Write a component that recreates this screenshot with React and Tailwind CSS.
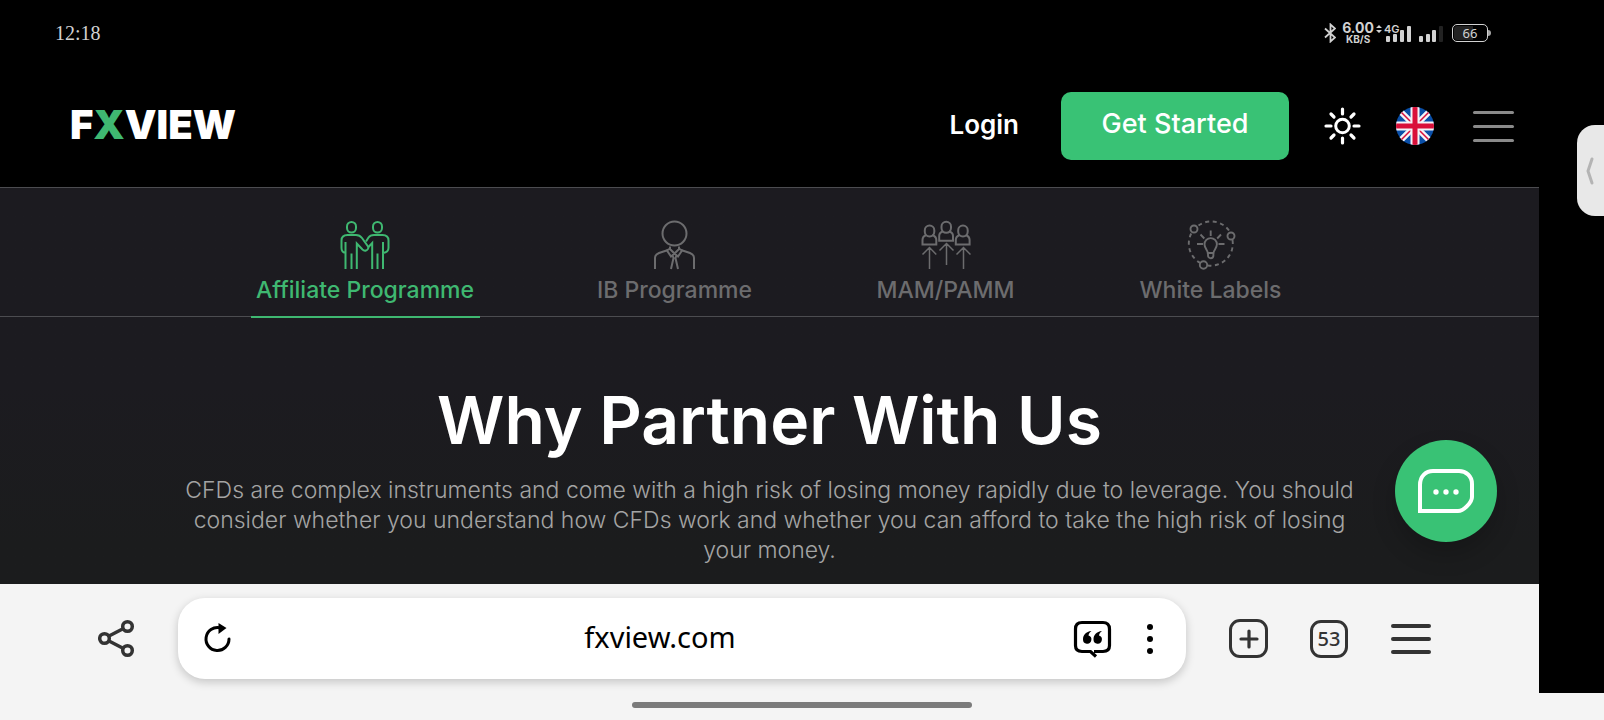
import { useState } from 'react';

const TABS = [
  { label: 'Affiliate Programme', icon: HandshakeIcon, width: 'w-[229px]' },
  { label: 'IB Programme', icon: BrokerIcon, width: 'w-[168px]' },
  { label: 'MAM/PAMM', icon: TeamIcon, width: 'w-[152px]' },
  { label: 'White Labels', icon: IdeaIcon, width: 'w-[156px]' },
];

function HandshakeIcon() {
  return (
    <svg className="w-[50px] h-[50px]" viewBox="0 0 50 50" fill="none" stroke="currentColor" strokeWidth="2">
      <rect x="7" y="2" width="9" height="10.5" rx="4.5" />
      <rect x="33" y="2" width="9" height="10.5" rx="4.5" />
      <path d="M5.5 49V22M5.500 33C3 32.500 1.500 31 1.500 28V20.500C1.500 17 4 15 7.500 15H16C19 15 20.500 16 22 18L28 26.500C28.800 28 27.800 30 26 30.500C24.500 31 23.500 30.500 22.500 29.500L16.800 23.500V49M11.500 33.500V49" />
      <path d="M43 49V22M43 33C46.500 32.500 48.500 31 48.500 28V20.500C48.500 17 46 15 42.500 15H34C31 15 29.500 16 28.500 17.500L26 21.500M28 27.500L32.200 23V49M37.500 33.500V49" />
    </svg>
  );
}

function BrokerIcon() {
  return (
    <svg className="w-[50px] h-[50px]" viewBox="0 0 50 50" fill="none" stroke="currentColor" strokeWidth="2">
      <circle cx="24.500" cy="13.500" r="12" />
      <path d="M5 49V38C5 35.500 6.500 34 9 33L18 30M44 49V38C44 35.500 42.500 34 40 33L31 30" />
      <path d="M20 26.500V29L24.500 33.500L29 29V26.500M20 28.500L17 30.500L21 36.500L24.500 33.500L28 36.500L32 30.500L29 28.500M22.500 35.500L23.500 38L21 49M26.500 35.500L25.500 38L28 49" />
    </svg>
  );
}

function TeamIcon() {
  return (
    <svg className="w-[50px] h-[50px]" viewBox="0 0 50 50" fill="none" stroke="currentColor" strokeWidth="2">
      <rect x="3.800" y="5.500" width="9.500" height="11" rx="4.700" />
      <rect x="20.500" y="1.800" width="9.500" height="11" rx="4.700" />
      <rect x="37.200" y="5.500" width="9.500" height="11" rx="4.700" />
      <path d="M5.300 15C2.500 16 1.500 17.500 1.500 20V24.500H15.300V20C15.300 17.500 14 16 11.300 15" />
      <path d="M22 11.300C19.300 12.300 18.200 13.500 18.200 16V20.800H32V16C32 13.500 30.700 12.300 28 11.300" />
      <path d="M38.700 15C36 16 34.800 17.500 34.800 20V24.500H48.600V20C48.600 17.500 47.300 16 44.700 15" />
      <path d="M8.500 49V28M1.500 34.500L8.500 27.500L15.300 34.500M25.500 45V24M18.500 30.500L25.500 23.500L32.500 30.500M42.500 49V28M35.500 34.500L42.500 27.500L49.500 34.500" strokeWidth="1.500" />
    </svg>
  );
}

function IdeaIcon() {
  return (
    <svg className="w-[50px] h-[50px]" viewBox="0 0 50 50" fill="none" stroke="currentColor" strokeWidth="1.900">
      <path d="M12.500 5.500A22 22 0 0 1 44 12M46.500 20A22 22 0 0 1 22 45.500M14.500 43A22 22 0 0 1 5.500 13" strokeDasharray="4 3.500" />
      <circle cx="8" cy="9" r="3.500" />
      <circle cx="45" cy="16" r="3.500" />
      <circle cx="17.500" cy="45" r="3.700" />
      <path d="M21.800 33C21.800 30 18.500 28.500 18.500 24.300A6.200 6.200 0 0 1 30.900 24.300C30.900 28.500 27.500 30 27.500 33ZM22 33V35.500A2.700 2.700 0 0 0 27.400 35.500V33M24.700 10.500V16M14.500 14.500L18.300 18.500M35 14.500L31.200 18.500M11 24H17M32.500 24H38.500" />
    </svg>
  );
}

function StatusBar() {
  return (
    <div className="flex h-[66px] items-center justify-between pl-[55px] pr-[48px] text-[#d2d2d2]">
      <time className="font-['Liberation_Serif',serif] text-[20px] leading-5">12:18</time>
      <div className="flex items-center">
        <svg className="mr-1.5 h-[20px] w-[13px]" viewBox="0 0 13 20" fill="none" stroke="currentColor" strokeWidth="1.800">
          <path d="M2 5.500L12 14.500L7.500 18.500V1.500L12 5.500L2 14.500" />
        </svg>
        <div className="flex flex-col items-center font-['Inter',sans-serif] font-bold">
          <span className="text-[14px] leading-3">6.00</span>
          <span className="text-[10px] leading-[10px]">KB/S</span>
        </div>
        <div className="relative ml-0.5 h-[18px] w-[35px]">
          <svg className="h-[18px] w-[35px]" viewBox="0 0 35 18" fill="currentColor">
            <path d="M0 4L3 1L6 4ZM0 6L3 9L6 6Z" />
            <rect x="10" y="12" width="4" height="6" rx="1" />
            <rect x="17" y="10" width="4" height="8" rx="1" />
            <rect x="24" y="6" width="4" height="12" rx="1" />
            <rect x="31" y="2" width="4" height="16" rx="1" />
          </svg>
          <span className="absolute left-2 top-0 font-['Inter',sans-serif] text-[11px] font-semibold leading-[10px]">4G</span>
        </div>
        <svg className="ml-2 h-[18px] w-[24px]" viewBox="0 0 24 18" fill="currentColor">
          <rect x="0" y="12" width="4" height="6" rx="1" />
          <rect x="7" y="10" width="4" height="8" rx="1" />
          <rect x="13" y="6" width="4" height="12" rx="1" />
          <rect x="20" y="2" width="4" height="16" rx="1" fill="#222" />
        </svg>
        <div className="ml-[9px] flex h-[18px] w-[36px] items-center justify-center rounded-[5px] border border-[#d2d2d2] bg-linear-to-r from-[#222] from-60% to-black to-60% bg-clip-content p-px font-['Noto_Sans',sans-serif] text-[13px] leading-4">
          66
        </div>
        <div className="h-[6px] w-[3px] rounded-r-sm bg-[#a5a5a5]" />
      </div>
    </div>
  );
}

function Header() {
  return (
    <header className="flex h-[122px] items-center justify-between border-b border-[#4c4c50] pl-[70px] pr-[25px] pb-[1px]">
      <a href="#home" className="pb-0.5 font-['Inter',sans-serif] text-[40px] font-black leading-10">
        F<span className="text-[#3fb871]">X</span>VIEW
      </a>
      <div className="flex items-center">
        <a href="#login" className="pb-0.5 text-[26px] font-semibold leading-8">Login</a>
        <button type="button" className="ml-[42px] h-[68px] w-[228px] rounded-[10px] bg-[#39c275] pb-1 text-[27px] font-medium">
          Get Started
        </button>
        <button type="button" aria-label="Theme" className="ml-[35px]">
          <svg className="size-[38px]" viewBox="0 0 38 38" fill="none" stroke="currentColor" strokeWidth="3.200" strokeLinecap="round">
            <circle cx="18.500" cy="19" r="6.800" strokeWidth="3" />
            <path d="M18.500 2V7M18.500 31V36M2 19H7M30 19H35M7 7L10 10M30 7L27 10M7 31L10 28M30 31L27 28" />
          </svg>
        </button>
        <button type="button" aria-label="English" className="ml-[34px]">
          <svg className="size-[38px] rounded-full" viewBox="0 0 38 38">
            <rect width="38" height="38" fill="#0a4fa8" />
            <path d="M0 0L38 38M38 0L0 38" stroke="#f4f4f8" strokeWidth="6" />
            <path d="M0 0L38 38M38 0L0 38" stroke="#d9103a" strokeWidth="1.500" />
            <path d="M19 0V38M0 19H38" stroke="#f4f4f8" strokeWidth="9" />
            <path d="M19 0V38M0 19H38" stroke="#d9103a" strokeWidth="5" />
          </svg>
        </button>
        <button type="button" aria-label="Menu" className="ml-[39px] flex flex-col gap-[11px]">
          <span className="h-[3px] w-[41px] rounded-full bg-[#8a8a8a]" />
          <span className="h-[3px] w-[41px] rounded-full bg-[#8a8a8a]" />
          <span className="h-[3px] w-[41px] rounded-full bg-[#8a8a8a]" />
        </button>
      </div>
    </header>
  );
}

function BrowserBar() {
  return (
    <div className="flex h-[109px] items-center bg-[#f4f4f4] pl-[98px] pr-[108px] text-[#333]">
      <button type="button" aria-label="Share">
        <svg className="h-[40px] w-[38px]" viewBox="0 0 38 40" fill="none" stroke="currentColor" strokeWidth="3.500">
          <circle cx="6.500" cy="19.500" r="4.800" />
          <circle cx="29.500" cy="7.500" r="4.800" />
          <circle cx="29.500" cy="31.500" r="4.800" />
          <path d="M11 17L25 9.800M11 22L25 29.200" />
        </svg>
      </button>
      <div className="ml-[42px] flex h-[81px] flex-1 items-center rounded-[27px] bg-white pl-[25px] pr-[33px] text-black shadow-[0_3px_10px_rgba(0,0,0,0.2)]">
        <button type="button" aria-label="Reload">
          <svg className="h-[32px] w-[30px]" viewBox="0 0 30 32" fill="none" stroke="currentColor" strokeWidth="3" strokeLinecap="round">
            <path d="M17 4.800A11.500 11.500 0 1 0 26 16" />
            <path d="M15.500 0L23.500 5L15.500 11Z" fill="currentColor" stroke="none" />
          </svg>
        </button>
        <input
          type="text"
          aria-label="Address"
          defaultValue="fxview.com"
          className="min-w-0 flex-1 pb-1 pl-[14px] text-center font-['Noto_Sans',sans-serif] text-[29px] leading-9 outline-none"
        />
        <button type="button" aria-label="Reader">
          <svg className="h-[40px] w-[40px]" viewBox="0 0 40 40" fill="none" stroke="currentColor" strokeWidth="3.200">
            <path d="M21 32.500H30C34 32.500 36.500 30.500 36.500 26.500V10C36.500 5.500 34 3.500 30 3.500H9C4.500 3.500 2.500 5.500 2.500 10V26.500C2.500 30.500 4.500 32.500 9 32.500H17.500L23 37.500" />
            <path d="M18.500 12C13 12.500 10 16 10 20.500A4.200 4.200 0 1 0 15.500 16.500C15.700 14.500 16.800 13.300 18.500 12ZM29 12C23.500 12.500 20.500 16 20.500 20.500A4.200 4.200 0 1 0 26 16.500C26.200 14.500 27.300 13.300 29 12Z" fill="currentColor" stroke="none" />
          </svg>
        </button>
        <button type="button" aria-label="Page options" className="ml-[34px] flex flex-col gap-1.5">
          <span className="size-[6px] rounded-full bg-black" />
          <span className="size-[6px] rounded-full bg-black" />
          <span className="size-[6px] rounded-full bg-black" />
        </button>
      </div>
      <button type="button" aria-label="New tab" className="ml-[43px] flex size-[39px] items-center justify-center rounded-[11px] border-3 border-[#333]">
        <svg className="size-[20px]" viewBox="0 0 20 20" stroke="currentColor" strokeWidth="3.200" strokeLinecap="round">
          <path d="M10 2V18M2 10H18" />
        </svg>
      </button>
      <button type="button" className="ml-[42px] flex size-[38px] items-center justify-center rounded-[11px] border-3 border-[#333] font-['Noto_Sans',sans-serif] text-[20px] font-medium">
        53
      </button>
      <button type="button" aria-label="Browser menu" className="ml-[43px] flex flex-col gap-[9px]">
        <span className="h-[4px] w-[40px] rounded-full bg-[#333]" />
        <span className="h-[4px] w-[40px] rounded-full bg-[#333]" />
        <span className="h-[4px] w-[40px] rounded-full bg-[#333]" />
      </button>
    </div>
  );
}

export default function App() {
  const [active, setActive] = useState('Affiliate Programme');

  return (
    <div className="flex min-h-screen flex-col bg-[#f4f4f4] font-['Inter',sans-serif] text-white">
      <div className="flex flex-1 bg-black">
        <div className="flex min-w-0 flex-1 flex-col">
          <StatusBar />
          <Header />
          <main className="relative flex-1 bg-linear-to-b from-[#1c1b20] from-50% to-[#1b1c1d] to-90%">
            <nav className="flex h-[129px] justify-center gap-[111px] border-b border-[#4c4c50]">
              {TABS.map(({ label, icon: Icon, width }) => (
                <button
                  key={label}
                  type="button"
                  onClick={() => setActive(label)}
                  className={`${width} flex h-[130px] flex-col items-center border-b-2 pt-8 text-[23px] font-medium leading-8 whitespace-nowrap ${
                    active === label ? 'border-[#3fb871] text-[#3fb871]' : 'border-transparent text-[#6c6c6e]'
                  }`}
                >
                  <Icon />
                  <span className="mt-1">{label}</span>
                </button>
              ))}
            </nav>

            <section className="px-[180px] pt-[63px] text-center">
              <h1 className="text-[66px] font-semibold leading-[80px]">Why Partner With Us</h1>
              <p className="mt-[15px] text-[23px] font-light leading-[30px] text-[#a4a4a4]">
                CFDs are complex instruments and come with a high risk of losing money rapidly due to leverage. You should consider whether you understand how CFDs work and whether you can afford to take the high risk of losing your money.
              </p>
            </section>

            <button
              type="button"
              aria-label="Chat"
              className="absolute right-[42px] bottom-[42px] flex size-[102px] items-center justify-center rounded-full bg-[#39c275] shadow-[0_12px_24px_rgba(0,0,0,0.2)]"
            >
              <svg className="h-[46px] w-[58px]" viewBox="0 0 58 46" fill="none" stroke="currentColor" strokeWidth="4">
                <path d="M3 43V17C3 8 9 3 16 3H42C49 3 55 8 55 16V29C55 34 47 43 41 43Z" />
                <g fill="currentColor" stroke="none">
                  <circle cx="19" cy="24" r="2.700" />
                  <circle cx="29" cy="24" r="2.700" />
                  <circle cx="39" cy="24" r="2.700" />
                </g>
              </svg>
            </button>
          </main>
          <BrowserBar />
        </div>

        <aside className="flex w-[65px] flex-col items-end pt-[125px]">
          <button type="button" aria-label="Open side panel" className="flex h-[91px] w-[27px] items-center justify-center rounded-l-[18px] bg-[#e8e8e8] text-[#b4b4b4]">
            <svg className="h-[28px] w-[10px]" viewBox="0 0 10 28" fill="none" stroke="currentColor" strokeWidth="3" strokeLinecap="round" strokeLinejoin="round">
              <path d="M6 2L2 14L6 26" />
            </svg>
          </button>
        </aside>
      </div>
      <footer className="flex h-[27px] justify-center pt-[9px]">
        <div className="h-[6px] w-[340px] rounded-full bg-[#7b7b7b]" />
      </footer>
    </div>
  );
}
